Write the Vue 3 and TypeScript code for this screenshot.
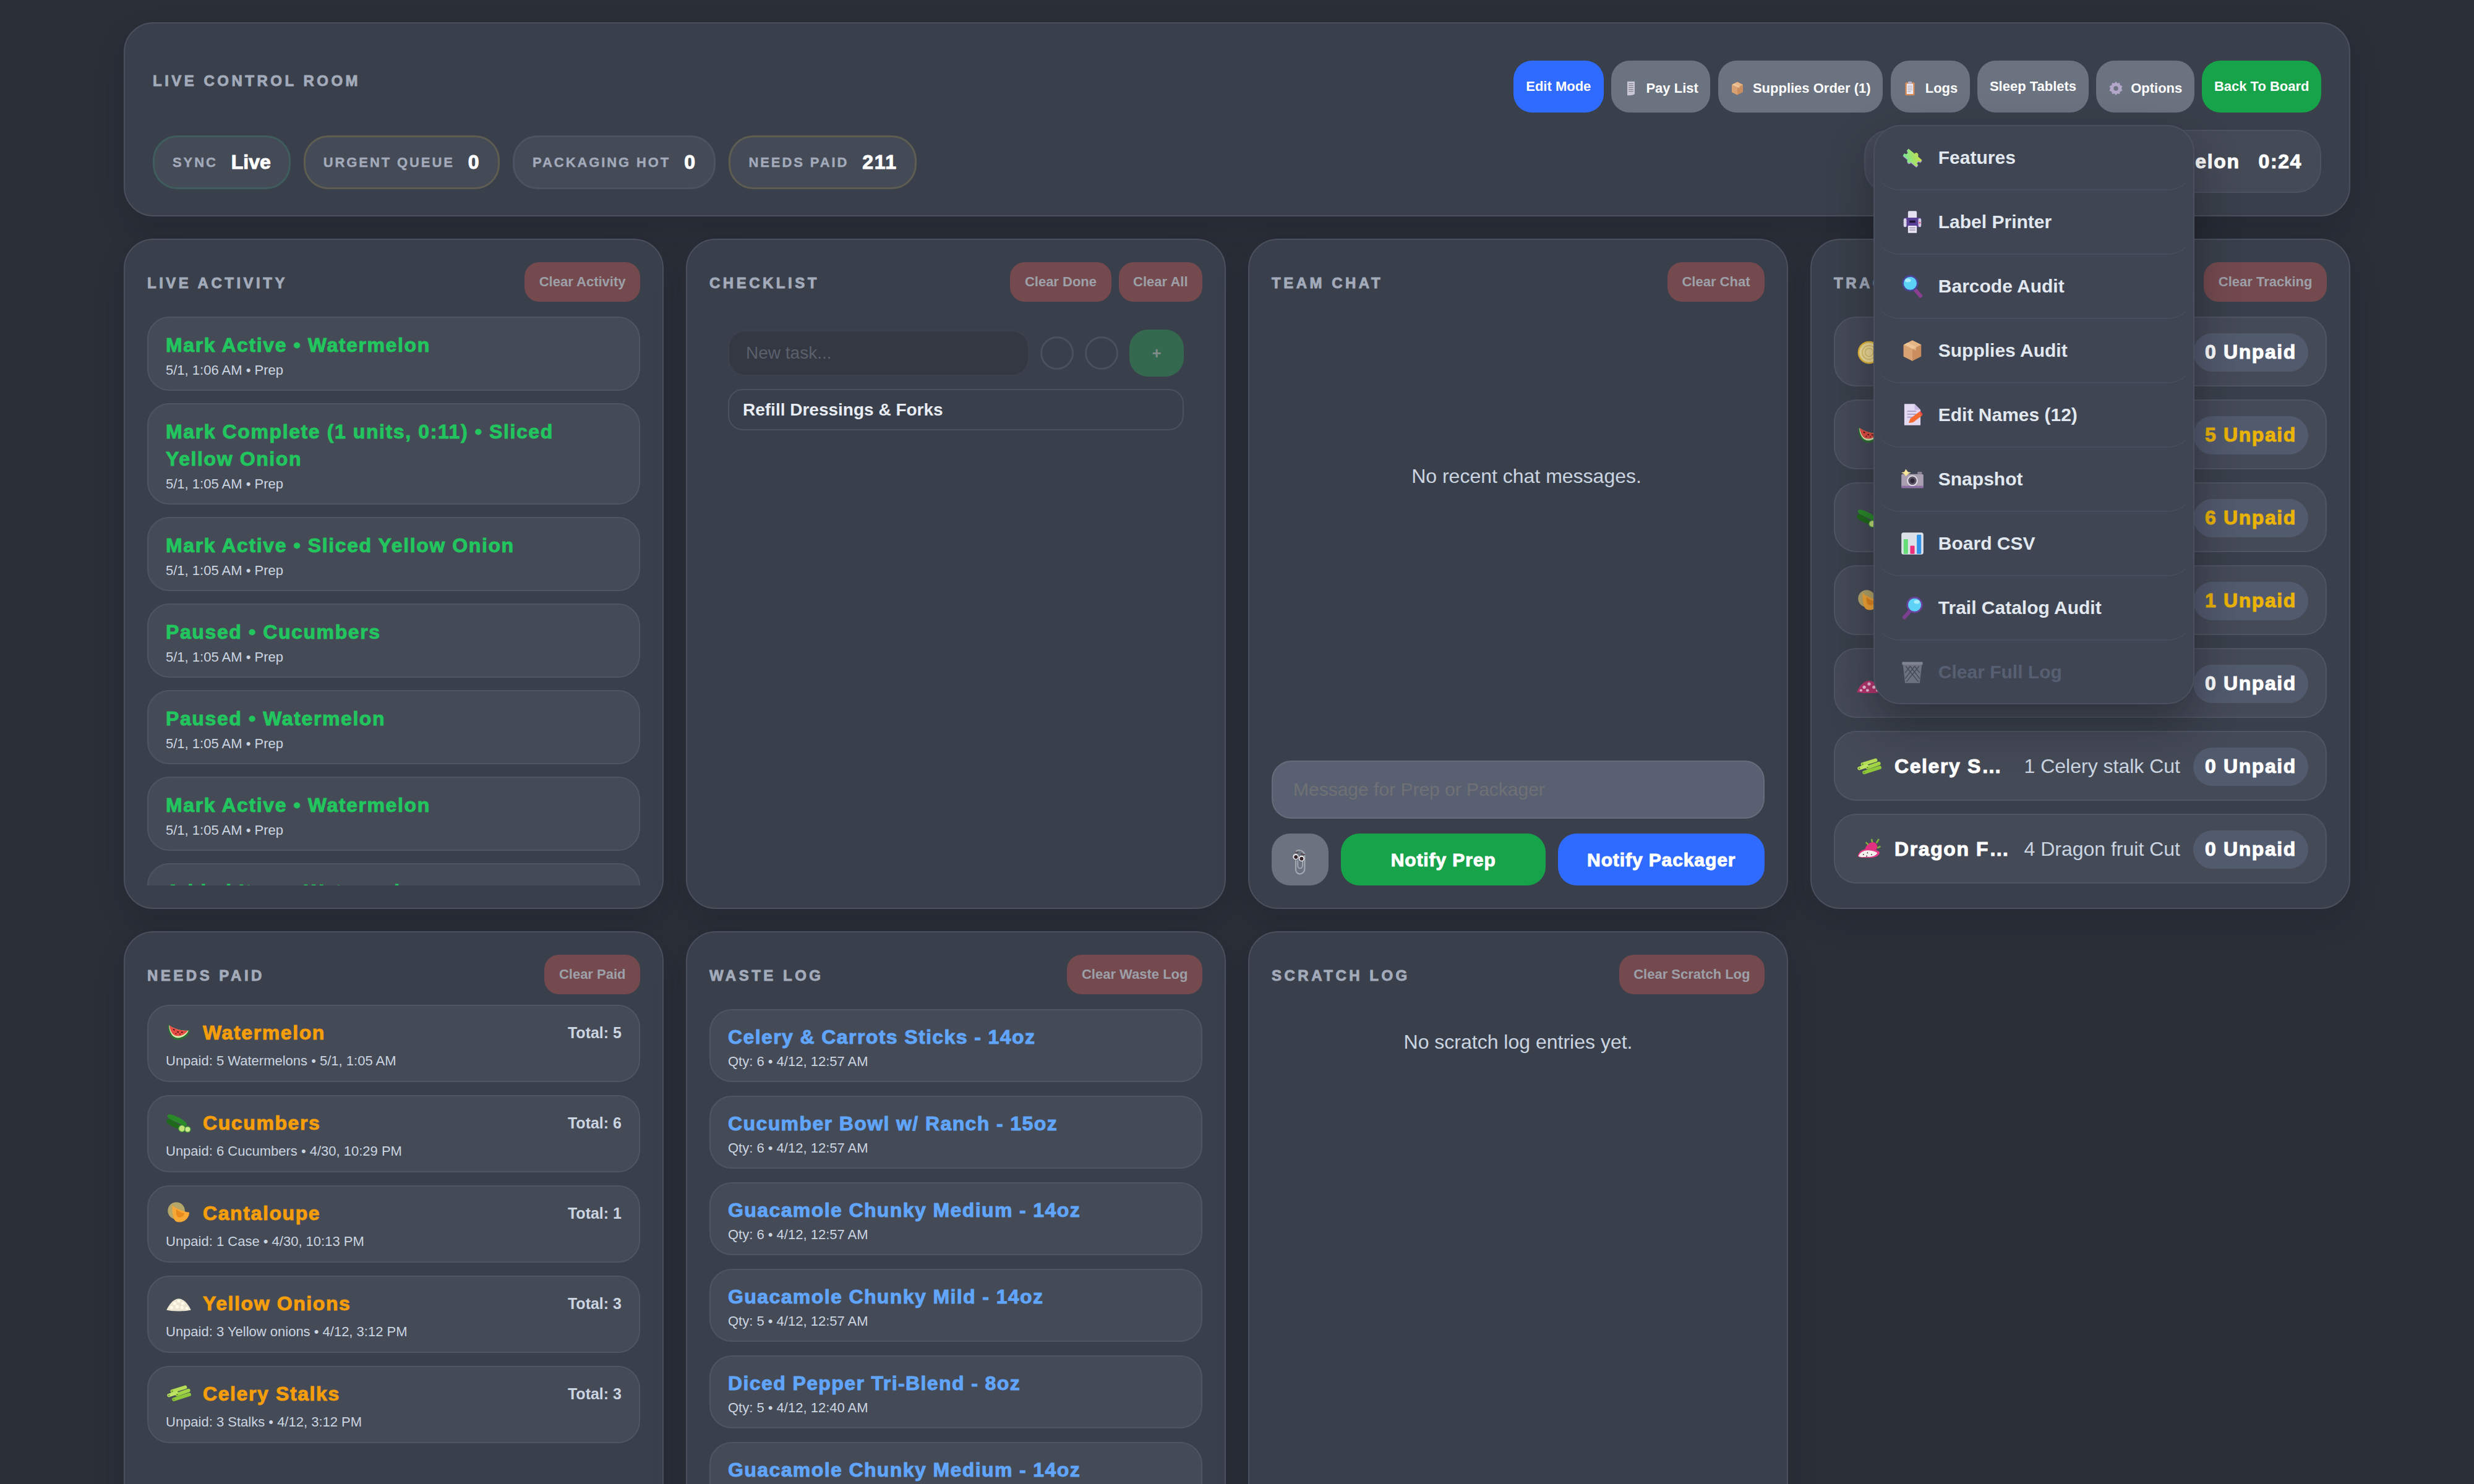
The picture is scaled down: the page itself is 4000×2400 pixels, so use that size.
<script setup lang="ts">
// Emoji stand-ins, drawn on a 32x32 grid
const icons: Record<string, string> = {
  puzzle: `<defs><linearGradient id="pz" x1="1" y1="0" x2="0" y2="1"><stop offset="0" stop-color="#cfdc42"/><stop offset="1" stop-color="#6ee89c"/></linearGradient></defs>
    <g transform="rotate(40 16 16)"><path d="M4 10H15c-1-4 6-4 5 0H28V14c-4-2-4 6 0 4V22H18c1 4-6 4-5 0H4V18c4 2 4-6 0-4Z" fill="#b49be0" transform="translate(.9 .9)"/><path d="M4 10H15c-1-4 6-4 5 0H28V14c-4-2-4 6 0 4V22H18c1 4-6 4-5 0H4V18c4 2 4-6 0-4Z" fill="url(#pz)"/></g>`,
  printer: `<rect x="10" y="1" width="12" height="10" rx="1.500" fill="#e4dff0"/><rect x="4" y="10" width="24" height="13" rx="2.500" fill="#5a3f96"/><rect x="4" y="11" width="4" height="12" rx="2" fill="#d8d2e6"/><rect x="24" y="11" width="4" height="12" rx="2" fill="#cfc8e0"/><rect x="12" y="14" width="8" height="3" fill="#1f1533"/><rect x="10" y="21" width="12" height="10" rx="1" fill="#e8e3f2"/><path d="M12 24h8M12 27h8" stroke="#9c93b3" stroke-width="1.2"/><circle cx="26" cy="17" r="1.1" fill="#ef4477"/>`,
  searchLeft: `<path d="M19 20l8 9" stroke="#8a3f92" stroke-width="5" stroke-linecap="round"/><circle cx="13" cy="12" r="10" fill="#5cd2f6" stroke="#48459a" stroke-width="2.2"/><ellipse cx="10" cy="8" rx="4" ry="2.500" fill="#a6ecfb"/>`,
  searchRight: `<path d="M13 20l-8 9" stroke="#7c3f92" stroke-width="5" stroke-linecap="round"/><circle cx="19" cy="12" r="10" fill="#5cd2f6" stroke="#6a429f" stroke-width="2.2"/><ellipse cx="22" cy="8" rx="4" ry="2.500" fill="#a6ecfb"/>`,
  box: `<path d="M16 2l12 6v16l-12 6-12-6V8z" fill="#c98d5e"/><path d="M16 2l12 6-12 6-12-6z" fill="#e6b585"/><path d="M16 14v16l-12-6V8z" fill="#d9a272"/><path d="M9 5l12 6v5l-4-2-12-6z" fill="#f0cfa8" opacity=".55"/>`,
  page: `<path d="M5 1h14l8 8v21H5z" fill="#e3d9f2"/><path d="M19 1l8 8h-8z" fill="#c7b6e2"/><path d="M9 11h12M9 15h12M9 19h8" stroke="#a99cc4" stroke-width="1.4"/><path d="M11 27l2-6 12-9 4 5-12 9z" fill="#f36b32"/><path d="M25 12l2-1 3 4-1 2z" fill="#ef4444"/>`,
  camera: `<rect x="1" y="9" width="30" height="19" rx="2" fill="#a99fb0"/><rect x="1" y="25" width="30" height="3" fill="#8d6fa6"/><path d="M7 2l3 4 4 1-4 2-3 3-2-3-4-2 4-1z" fill="#f7e39a"/><circle cx="16" cy="18" r="6.500" fill="#5b5366" stroke="#e6e1ea" stroke-width="1.6"/><circle cx="16" cy="18" r="3" fill="#2c2735"/><rect x="23" y="6" width="6" height="3" fill="#8f8798"/>`,
  chart: `<rect x="1" y="1" width="30" height="30" rx="3" fill="#dde1e8"/><rect x="4" y="10" width="6" height="20" rx="1" fill="#66dd78"/><rect x="13" y="19" width="6" height="11" rx="1" fill="#ec2f7d"/><rect x="22" y="4" width="6" height="26" rx="1" fill="#2f94ea"/>`,
  trash: `<path d="M3 5h26l-3 26H6z" fill="#747a86"/><rect x="2" y="2" width="28" height="4" rx="1" fill="#8b909b"/><path d="M7 8l17 21M13 8l13 17M19 8l7 9M25 8l-17 21M19 8L6 25M13 8l-7 9" stroke="#454a56" stroke-width="1.1"/>`,
  receipt: `<path d="M8 1h16v27c-2 3-14 3-16 3z" fill="#c9c6d4"/><path d="M11 6h10M11 10h10M11 14h10M11 18h10M11 22h10" stroke="#77778a" stroke-width="1.500"/>`,
  clipboard: `<rect x="6" y="3" width="20" height="28" rx="2" fill="#d98a58"/><rect x="9" y="6" width="14" height="22" fill="#eceaf2"/><rect x="12" y="1" width="8" height="5" rx="1" fill="#b8b3c6"/><path d="M11 11h10M11 15h10M11 19h10M11 23h7" stroke="#9a97ab" stroke-width="1.4"/>`,
  gear: `<path d="M16 1l3 4 5-1 1 5 5 2-2 5 2 5-5 2-1 5-5-1-3 4-3-4-5 1-1-5-5-2 2-5-2-5 5-2 1-5 5 1z" fill="#b3a7c9"/><circle cx="16" cy="16" r="5" fill="#6b7280"/>`,
  watermelon: `<path d="M3 6C11 12 22 14 30 13 29 22 16 29 9 23 4 19 2 12 3 6Z" fill="#2c6e34"/><path d="M4 7C11 12 21 14 28 13.500 26 20 16 25 10 21 6 18 4 12 4 7Z" fill="#d8ecb0"/><path d="M4.500 7C11 12 21 14 27 13.500 25 18 16 22 11 19.500 7 17 5 12 4.500 7Z" fill="#ea4d45"/><path d="M9 12l2 1M14 15l2 .5M19 15.500l2 0M12 17l1 .6M17 18l1-.3" stroke="#3a1414" stroke-width="1.300"/>`,
  cucumber: `<path d="M2 7c2-3 6-1 11 1s13 7 13 10-4 2-9-1S1 11 2 7z" fill="#2a8a2a"/><path d="M1 13c1-3 4-2 9 1s9 6 8 8-5 1-9-1-9-5-8-8z" fill="#1f6a1c"/><circle cx="20" cy="23" r="4.200" fill="#c2e277" stroke="#3b8f30"/><circle cx="27" cy="24" r="3.600" fill="#cbe98a" stroke="#3b8f30"/>`,
  cantaloupe: `<circle cx="13" cy="13" r="10.500" fill="#b5a66a"/><path d="M8 6c4 4 14 8 21 9 0 7-6 12-12 12-6 0-9-3-9-21z" fill="#f7a835"/><path d="M13 11c3 3 7 5 10 5-1 4-4 6-7 5-3-1-4-6-3-10z" fill="#e88a1e"/>`,
  onionPile: `<path d="M1 24c2-5 8-14 15-14s13 9 15 14c-6 2-24 2-30 0z" fill="#ece6d2"/><g fill="#fffbe9"><circle cx="11" cy="16" r="2"/><circle cx="16" cy="13" r="2"/><circle cx="21" cy="16" r="2"/><circle cx="7" cy="21" r="2"/><circle cx="14" cy="20" r="2.200"/><circle cx="20" cy="21" r="2"/><circle cx="26" cy="22" r="1.800"/></g>`,
  celery: `<g stroke-linecap="round" stroke-width="4.400"><path d="M8 13L24 8" stroke="#b4dd55"/><path d="M14 17L28 12" stroke="#a2d546"/><path d="M4 18L13 15" stroke="#bfe364"/><path d="M10 23L29 17" stroke="#8fc93b"/></g><g fill="#6c9c2a"><circle cx="8" cy="13" r="1"/><circle cx="4" cy="18" r="1"/><circle cx="10" cy="23" r="1"/><circle cx="14" cy="17" r="1"/></g>`,
  dragon: `<path d="M2 24c1-6 7-9 12-9s12 1 15 4c0 5-6 7-13 7S3 26 2 24z" fill="#e23a86"/><path d="M3 24c2-5 7-7 11-7s9 1 12 3c-1 3-5 5-11 5S5 26 3 24z" fill="#f3f1ee"/><path d="M11 15c2-6 7-9 11-8s5 5 3 9c-5 1-10 0-14-1z" fill="#e0307f"/><path d="M15 10l-3-3M20 7l-1-4M25 8l3-5M26 14l4-2" stroke="#7fb03a" stroke-width="2"/><g fill="#333"><circle cx="9" cy="22" r=".7"/><circle cx="14" cy="20" r=".7"/><circle cx="19" cy="22" r=".7"/><circle cx="13" cy="24" r=".7"/></g>`,
  onionSlice: `<circle cx="16" cy="16" r="14" fill="#e5b93a"/><circle cx="16" cy="16" r="12" fill="#f3e09a"/><circle cx="16" cy="16" r="8.500" fill="none" stroke="#d9bb62" stroke-width="1"/><circle cx="16" cy="16" r="5" fill="none" stroke="#d9bb62" stroke-width="1"/>`,
  redOnion: `<path d="M1 26c2-7 9-14 15-14s13 7 15 14c-7 2-23 2-30 0z" fill="#b8356f"/><g fill="#f1c4da"><circle cx="10" cy="20" r="2"/><circle cx="16" cy="16" r="2"/><circle cx="22" cy="20" r="2"/><circle cx="6" cy="24" r="1.600"/><circle cx="14" cy="24" r="1.800"/><circle cx="26" cy="24" r="1.600"/></g>`,
  clippy: `<path d="M9.500 8c1-3 3-4 5-4 4 0 7.400 3 7.400 7v17c0 4-3 6.700-6.200 6.700s-5.300-2.700-5.300-5.700V17" fill="none" stroke="#a4a8b0" stroke-width="1.700"/><path d="M13 17v7c0 3.500 2.700 3.500 2.700 3.500s3.500 0 3.500-3.500V17" fill="none" stroke="#a4a8b0" stroke-width="1.500"/><circle cx="10.400" cy="12.500" r="3.700" fill="#eee"/><circle cx="17.900" cy="14.700" r="3.700" fill="#eee"/><circle cx="10.600" cy="12.800" r="2.400" fill="#33222a"/><circle cx="17.900" cy="15" r="2.400" fill="#33222a"/><path d="M9 6.700h5M17 8.800l5.400 1.100" stroke="#55424a" stroke-width="1.600"/>`,
}

const topButtons = [
  { label: 'Edit Mode', kind: 'blue' },
  { label: 'Pay List', kind: 'gray', icon: 'receipt' },
  { label: 'Supplies Order (1)', kind: 'gray', icon: 'box' },
  { label: 'Logs', kind: 'gray', icon: 'clipboard' },
  { label: 'Sleep Tablets', kind: 'gray' },
]

const stats = [
  { label: 'SYNC', value: 'Live', tone: 'good' },
  { label: 'URGENT QUEUE', value: '0', tone: 'warn' },
  { label: 'PACKAGING HOT', value: '0', tone: '' },
  { label: 'NEEDS PAID', value: '211', tone: 'warn' },
]

const menuItems = [
  { label: 'Features', icon: 'puzzle' },
  { label: 'Label Printer', icon: 'printer' },
  { label: 'Barcode Audit', icon: 'searchLeft' },
  { label: 'Supplies Audit', icon: 'box' },
  { label: 'Edit Names (12)', icon: 'page' },
  { label: 'Snapshot', icon: 'camera' },
  { label: 'Board CSV', icon: 'chart' },
  { label: 'Trail Catalog Audit', icon: 'searchRight' },
  { label: 'Clear Full Log', icon: 'trash', disabled: true },
]

const activity = [
  { title: 'Mark Active • Watermelon', sub: '5/1, 1:06 AM • Prep' },
  { title: 'Mark Complete (1 units, 0:11) • Sliced Yellow Onion', sub: '5/1, 1:05 AM • Prep' },
  { title: 'Mark Active • Sliced Yellow Onion', sub: '5/1, 1:05 AM • Prep' },
  { title: 'Paused • Cucumbers', sub: '5/1, 1:05 AM • Prep' },
  { title: 'Paused • Watermelon', sub: '5/1, 1:05 AM • Prep' },
  { title: 'Mark Active • Watermelon', sub: '5/1, 1:05 AM • Prep' },
  { title: 'Added Item • Watermelon', sub: '5/1, 1:05 AM • Prep' },
]

const tracking = [
  { icon: 'onionSlice', name: 'Sliced Yellow Onion', detail: '1 Case Cut', unpaid: 0 },
  { icon: 'watermelon', name: 'Watermelon', detail: '5 Cut', unpaid: 5 },
  { icon: 'cucumber', name: 'Cucumbers', detail: '6 Cut', unpaid: 6 },
  { icon: 'cantaloupe', name: 'Cantaloupe', detail: '1 Case Cut', unpaid: 1 },
  { icon: 'redOnion', name: 'Red Onions', detail: '2 Cut', unpaid: 0 },
  { icon: 'celery', name: 'Celery Stalks', detail: '1 Celery stalk Cut', unpaid: 0, narrow: true },
  { icon: 'dragon', name: 'Dragon Fruit', detail: '4 Dragon fruit Cut', unpaid: 0 },
]

const needsPaid = [
  { icon: 'watermelon', name: 'Watermelon', total: 5, sub: 'Unpaid: 5 Watermelons • 5/1, 1:05 AM' },
  { icon: 'cucumber', name: 'Cucumbers', total: 6, sub: 'Unpaid: 6 Cucumbers • 4/30, 10:29 PM' },
  { icon: 'cantaloupe', name: 'Cantaloupe', total: 1, sub: 'Unpaid: 1 Case • 4/30, 10:13 PM' },
  { icon: 'onionPile', name: 'Yellow Onions', total: 3, sub: 'Unpaid: 3 Yellow onions • 4/12, 3:12 PM' },
  { icon: 'celery', name: 'Celery Stalks', total: 3, sub: 'Unpaid: 3 Stalks • 4/12, 3:12 PM' },
]

const waste = [
  { title: 'Celery & Carrots Sticks - 14oz', sub: 'Qty: 6 • 4/12, 12:57 AM' },
  { title: 'Cucumber Bowl w/ Ranch - 15oz', sub: 'Qty: 6 • 4/12, 12:57 AM' },
  { title: 'Guacamole Chunky Medium - 14oz', sub: 'Qty: 6 • 4/12, 12:57 AM' },
  { title: 'Guacamole Chunky Mild - 14oz', sub: 'Qty: 5 • 4/12, 12:57 AM' },
  { title: 'Diced Pepper Tri-Blend - 8oz', sub: 'Qty: 5 • 4/12, 12:40 AM' },
  { title: 'Guacamole Chunky Medium - 14oz', sub: 'Qty: 5 • 4/12, 12:40 AM' },
]
</script>

<template>
  <div class="room">
    <header class="top panel-box">
      <div class="top-left">
        <div class="eyebrow room-title">LIVE CONTROL ROOM</div>
        <div class="stats">
          <div v-for="s in stats" :key="s.label" class="stat" :class="s.tone">
            <span class="stat-label">{{ s.label }}</span>
            <span class="stat-value">{{ s.value }}</span>
          </div>
        </div>
      </div>
      <div class="top-right">
        <div class="actions">
          <button v-for="b in topButtons" :key="b.label" class="btn" :class="[b.kind, { 'with-ico': b.icon }]">
            <svg v-if="b.icon" class="btn-ico" viewBox="0 0 32 32" v-html="icons[b.icon]" />
            {{ b.label }}
          </button>
          <div class="menu-anchor">
            <button class="btn gray with-ico">
              <svg class="btn-ico" viewBox="0 0 32 32" v-html="icons.gear" />
              Options
            </button>
            <div class="menu">
              <div v-for="m in menuItems" :key="m.label" class="menu-item" :class="{ disabled: m.disabled }">
                <svg class="menu-ico" viewBox="0 0 32 32" v-html="icons[m.icon]" />
                <span>{{ m.label }}</span>
              </div>
            </div>
          </div>
          <button class="btn green">Back To Board</button>
        </div>
        <div class="now">
          <span class="now-label">ACTIVE</span>
          <span class="heavy now-name">Watermelon</span>
          <span class="heavy now-time">0:24</span>
        </div>
      </div>
    </header>

    <main class="grid">
      <section class="panel">
        <div class="head">
          <h2 class="eyebrow">LIVE ACTIVITY</h2>
          <div class="head-btns"><button class="clear">Clear Activity</button></div>
        </div>
        <div class="list">
          <div v-for="(a, i) in activity" :key="i" class="card">
            <div class="heavy card-title green-text">{{ a.title }}</div>
            <div class="card-sub">{{ a.sub }}</div>
          </div>
        </div>
      </section>

      <section class="panel">
        <div class="head">
          <h2 class="eyebrow">CHECKLIST</h2>
          <div class="head-btns">
            <button class="clear">Clear Done</button>
            <button class="clear">Clear All</button>
          </div>
        </div>
        <div class="check">
          <div class="check-add">
            <input class="task-input" placeholder="New task..." />
            <span class="dot" />
            <span class="dot" />
            <button class="add">+</button>
          </div>
          <div class="task">Refill Dressings &amp; Forks</div>
        </div>
      </section>

      <section class="panel">
        <div class="head">
          <h2 class="eyebrow">TEAM CHAT</h2>
          <div class="head-btns"><button class="clear">Clear Chat</button></div>
        </div>
        <div class="chat-empty">No recent chat messages.</div>
        <input class="chat-input" placeholder="Message for Prep or Packager" />
        <div class="chat-btns">
          <button class="attach"><svg viewBox="0 0 32 32" v-html="icons.clippy" /></button>
          <button class="notify prep">Notify Prep</button>
          <button class="notify pack">Notify Packager</button>
        </div>
      </section>

      <section class="panel">
        <div class="head">
          <h2 class="eyebrow">TRACKING</h2>
          <div class="head-btns"><button class="clear">Clear Tracking</button></div>
        </div>
        <div class="list track-list">
          <div v-for="t in tracking" :key="t.name" class="track">
            <svg class="thumb" viewBox="0 0 32 32" v-html="icons[t.icon]" />
            <span class="heavy track-name" :class="{ narrow: t.narrow }">{{ t.name }}</span>
            <span class="track-detail">{{ t.detail }}</span>
            <span class="heavy pill" :class="{ owed: t.unpaid > 0 }">{{ t.unpaid }} Unpaid</span>
          </div>
        </div>
      </section>

      <section class="panel">
        <div class="head">
          <h2 class="eyebrow">NEEDS PAID</h2>
          <div class="head-btns"><button class="clear">Clear Paid</button></div>
        </div>
        <div class="list paid-list">
          <div v-for="n in needsPaid" :key="n.name" class="card paid">
            <div class="paid-top">
              <svg class="thumb" viewBox="0 0 32 32" v-html="icons[n.icon]" />
              <span class="heavy card-title orange-text">{{ n.name }}</span>
              <span class="paid-total">Total: {{ n.total }}</span>
            </div>
            <div class="card-sub">{{ n.sub }}</div>
          </div>
        </div>
      </section>

      <section class="panel">
        <div class="head">
          <h2 class="eyebrow">WASTE LOG</h2>
          <div class="head-btns"><button class="clear">Clear Waste Log</button></div>
        </div>
        <div class="list waste-list">
          <div v-for="(w, i) in waste" :key="i" class="card waste">
            <div class="heavy card-title blue-text">{{ w.title }}</div>
            <div class="card-sub">{{ w.sub }}</div>
          </div>
        </div>
      </section>

      <section class="panel">
        <div class="head">
          <h2 class="eyebrow">SCRATCH LOG</h2>
          <div class="head-btns"><button class="clear">Clear Scratch Log</button></div>
        </div>
        <div class="scratch-empty">No scratch log entries yet.</div>
      </section>
    </main>
  </div>
</template>

<style scoped>
.room {
  width: 4000px;
  height: 2400px;
  overflow: hidden;
  box-sizing: border-box;
  padding: 36px 200px 0;
  display: flex;
  flex-direction: column;
  gap: 36px;
  font-family: "Liberation Sans", Arial, sans-serif;
  color: #e2e8f0;
}

.panel-box,
.panel {
  box-sizing: border-box;
  background: #3a404b;
  border: 2px solid #4a505e;
  border-radius: 48px;
  box-shadow: 0 20px 50px rgba(15, 18, 25, 0.18);
}

.eyebrow {
  margin: 0;
  font-size: 24px;
  line-height: 28px;
  font-weight: 700;
  letter-spacing: 4.5px;
  color: #a3abbb;
  -webkit-text-stroke: 0.9px #a3abbb;
}

.head .eyebrow {
  padding-top: 3px;
}

.heavy {
  font-weight: 700;
  letter-spacing: 1.6px;
  -webkit-text-stroke: 1px currentColor;
}

/* top bar */
.top {
  flex: none;
  height: 314px;
  padding: 60px 45px 36px;
  display: flex;
  justify-content: space-between;
}

.top-left {
  display: flex;
  flex-direction: column;
}

.room-title {
  margin: 19px 0 74px;
}

.stats {
  display: flex;
  gap: 21px;
}

.stat {
  box-sizing: border-box;
  height: 87px;
  padding: 0 29px;
  display: flex;
  align-items: center;
  gap: 22px;
  background: #454a57;
  border: 3px solid #4c5262;
  border-radius: 40px;
}

.stat.good { border-color: #3f5d5c; }
.stat.warn { border-color: #5e5d52; }

.stat-label {
  font-size: 22px;
  font-weight: 700;
  letter-spacing: 2.9px;
  color: #a3abbb;
  -webkit-text-stroke: 0.4px #a3abbb;
}

.stat-value {
  font-size: 32px;
  font-weight: 700;
  letter-spacing: 1.5px;
  color: #fff;
  -webkit-text-stroke: 1px #fff;
}

.stat.good .stat-value { letter-spacing: 0; }

.top-right {
  display: flex;
  flex-direction: column;
  align-items: flex-end;
  gap: 28px;
}

.actions {
  display: flex;
  gap: 12.6px;
}

.btn {
  height: 84px;
  padding: 0 19.500px;
  border: 0;
  border-radius: 30px;
  display: flex;
  align-items: center;
  font-family: inherit;
  font-size: 22px;
  font-weight: 700;
  white-space: nowrap;
  color: #fff;
}

.btn.blue { background: #2f6bff; padding: 0 20.500px; }
.btn.gray { background: #6b7280; }
.btn.green { background: #16a34a; }
.btn.with-ico { padding-top: 5px; }

.btn-ico {
  width: 24px;
  height: 24px;
  margin-right: 12.500px;
  flex: none;
}

.menu-anchor {
  position: relative;
}

.menu {
  position: absolute;
  z-index: 5;
  top: 104px;
  right: 0;
  width: 519px;
  box-sizing: border-box;
  background: #3f4553;
  border: 2px solid #4a505e;
  border-radius: 44px;
  box-shadow: 0 30px 70px rgba(12, 14, 20, 0.4);
}

.menu-item {
  height: 104px;
  box-sizing: border-box;
  padding: 0 44px 0 42px;
  display: flex;
  align-items: center;
  gap: 23px;
  font-size: 30px;
  font-weight: 700;
  color: #e2e8f0;
  border-bottom: 2px solid #474d5c;
  border-radius: 40px;
}

.menu-item:last-child {
  height: 101px;
  border-bottom: 0;
}

.menu-item.disabled { color: #566072; }
.menu-item.disabled .menu-ico { opacity: 0.85; }

.menu-ico {
  width: 38px;
  height: 38px;
  flex: none;
}

.now {
  box-sizing: border-box;
  width: 739px;
  height: 102px;
  padding: 0 29px;
  display: flex;
  justify-content: flex-end;
  align-items: center;
  gap: 30px;
  background: #454a57;
  border: 2px solid #4c5262;
  border-radius: 40px;
  font-size: 32px;
  color: #fff;
}

.now-label {
  font-size: 22px;
  font-weight: 700;
  color: #a3abbb;
}

/* panels */
.grid {
  flex: none;
  display: grid;
  grid-template-columns: repeat(4, 873px);
  grid-template-rows: 1084px 1084px;
  gap: 36px;
}

.panel {
  padding: 36px 36px;
  display: flex;
  flex-direction: column;
  min-height: 0;
  overflow: hidden;
}

.head {
  flex: none;
  height: 64px;
  margin-bottom: 24px;
  display: flex;
  align-items: center;
  justify-content: space-between;
}

.head-btns {
  display: flex;
  gap: 12px;
}

.clear {
  height: 64px;
  padding: 0 23.500px;
  border: 0;
  border-radius: 24px;
  background: #744a4f;
  color: #9da0a8;
  font-family: inherit;
  font-size: 22px;
  font-weight: 700;
  white-space: nowrap;
}

.list {
  flex: 1;
  min-height: 0;
  overflow: hidden;
  display: flex;
  flex-direction: column;
  gap: 20px;
}

.card {
  flex: none;
  box-sizing: border-box;
  padding: 22px 28px 16px;
  background: #454a57;
  border: 2px solid #4f5564;
  border-radius: 36px;
}

.card-title {
  font-size: 32px;
  line-height: 44px;
}

.card-sub {
  margin-top: 4px;
  font-size: 22px;
  line-height: 30px;
  color: #cbd5e1;
}

.green-text { color: #22c55e; }
.orange-text { color: #f59e0b; }
.blue-text { color: #60a5fa; }

/* needs paid */
.paid-list {
  margin-top: -7px;
  gap: 21px;
}

.card.paid {
  padding: 21px 28px 17px;
}

.paid .card-sub {
  margin-top: 9px;
}

.paid-top {
  display: flex;
  align-items: center;
  height: 44px;
}

.paid-top .thumb {
  margin-right: 18px;
}

.paid-total {
  margin-left: auto;
  font-size: 25px;
  font-weight: 700;
  color: #cbd5e1;
}

.thumb {
  width: 42px;
  height: 42px;
  flex: none;
}

/* waste */
.waste-list {
  gap: 22px;
}

.card.waste {
  padding: 21px 28px 16px;
}

.card.waste .card-title {
  letter-spacing: 1.4px;
}

.card.waste .card-sub {
  margin-top: 3px;
}

/* checklist */
.check {
  padding: 21px 30px 0;
  display: flex;
  flex-direction: column;
  gap: 20px;
}

.check-add {
  display: flex;
  align-items: center;
  gap: 18px;
  height: 76px;
}

.task-input {
  width: 491px;
  height: 74px;
  box-sizing: border-box;
  padding: 0 27px;
  background: #333843;
  border: 2px solid #3c414d;
  border-radius: 28px;
  font-family: inherit;
  font-size: 28px;
  color: #e2e8f0;
  outline: none;
}

.task-input::placeholder { color: #5b606d; opacity: 1; }

.dot {
  flex: none;
  width: 54px;
  height: 54px;
  box-sizing: border-box;
  border: 3px solid #4b505d;
  border-radius: 50%;
}

.add {
  flex: none;
  width: 88px;
  height: 76px;
  border: 0;
  border-radius: 30px;
  background: #34694f;
  color: #7e8c89;
  font-family: inherit;
  font-size: 26px;
  font-weight: 700;
}

.task {
  box-sizing: border-box;
  height: 67px;
  padding: 0 22px;
  display: flex;
  align-items: center;
  border: 2px solid #4b5160;
  border-radius: 24px;
  font-size: 28px;
  font-weight: 700;
  color: #e8edf5;
}

/* chat */
.chat-empty {
  flex: 1;
  padding: 240px 0 0 27px;
  text-align: center;
  font-size: 32px;
  line-height: 36px;
  color: #cbd5e1;
}

.chat-input {
  flex: none;
  height: 94px;
  box-sizing: border-box;
  padding: 0 33px;
  background: #596071;
  border: 2px solid #666c7b;
  border-radius: 32px;
  font-family: inherit;
  font-size: 30px;
  color: #e2e8f0;
  outline: none;
}

.chat-input::placeholder { color: #6f7175; opacity: 1; }

.chat-btns {
  flex: none;
  margin-top: 24px;
  display: flex;
  gap: 20px;
}

.attach {
  width: 92px;
  height: 84px;
  padding: 0;
  border: 0;
  border-radius: 30px;
  background: #6b7280;
  display: flex;
  align-items: center;
  justify-content: center;
}

.attach svg {
  width: 40px;
  height: 40px;
  overflow: visible;
}

.notify {
  height: 84px;
  padding-top: 3px;
  border: 0;
  border-radius: 30px;
  font-family: inherit;
  font-size: 30px;
  font-weight: 700;
  letter-spacing: 0.9px;
  color: #fff;
  -webkit-text-stroke: 1px #fff;
}

.notify.prep { width: 332px; background: #16a34a; }
.notify.pack { width: 334px; background: #2f6bff; }

/* tracking */
.track-list {
  gap: 21px;
}

.track {
  flex: none;
  height: 113px;
  box-sizing: border-box;
  padding: 2px 28px 0 34px;
  display: flex;
  align-items: center;
  background: #454a57;
  border: 2px solid #4f5564;
  border-radius: 36px;
}

.track-name {
  width: 190px;
  margin-left: 20px;
  flex: none;
  font-size: 32px;
  color: #fff;
  white-space: nowrap;
  overflow: hidden;
  text-overflow: ellipsis;
}

.track-name.narrow {
  width: 182px;
}

.track-detail {
  flex: 1;
  min-width: 0;
  text-align: right;
  white-space: nowrap;
  font-size: 32px;
  color: #cbd5e1;
}

.pill {
  flex: none;
  width: 186px;
  height: 62px;
  margin-left: 21px;
  display: flex;
  align-items: center;
  justify-content: center;
  background: #525a6e;
  border-radius: 31px;
  font-size: 32px;
  color: #fff;
}

.pill.owed { color: #eab308; }

/* scratch */
.scratch-empty {
  padding-top: 35px;
  text-align: center;
  font-size: 32px;
  line-height: 36px;
  color: #cbd5e1;
}
</style>

<style>
html,
body {
  margin: 0;
  background: #2b2f38;
}
</style>
